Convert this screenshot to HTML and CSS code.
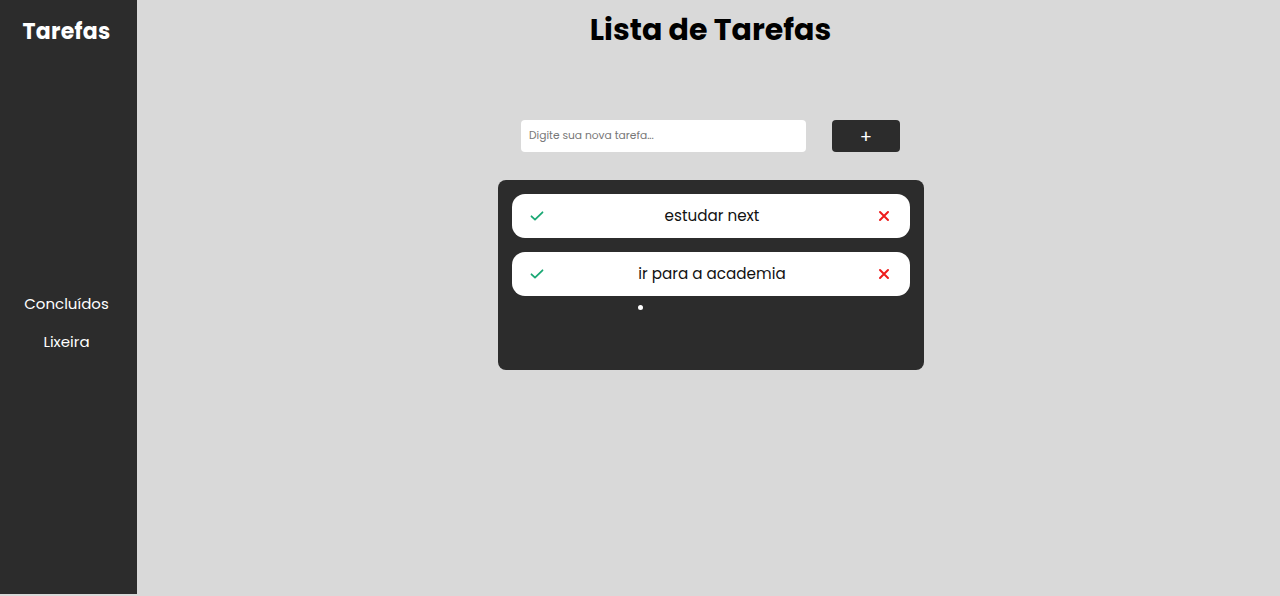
FILE: index.html
```html
<!DOCTYPE html>
<html lang="pt-BR">
<head>
<meta charset="utf-8">
<title>Lista de Tarefas</title>
<link rel="stylesheet" href="styles.css">
</head>
<body>
<div class="app">
  <aside class="sidebar">
    <h2 class="brand">Tarefas</h2>
    <nav class="nav">
      <a class="nav-link" href="#">Concluídos</a>
      <a class="nav-link" href="#">Lixeira</a>
    </nav>
  </aside>
  <main class="main">
    <h1 class="title">Lista de Tarefas</h1>
    <form class="new-task">
      <input class="task-input" type="text" placeholder="Digite sua nova tarefa...">
      <button class="add-btn" type="button">+</button>
    </form>
    <section class="board">
      <div class="task">
        <svg class="icon" viewBox="0 0 16 16" width="16" height="16"><path d="M2.5 8.3 L6 11.6 L13.5 4.3" fill="none" stroke="#1aa874" stroke-width="1.8" stroke-linecap="round" stroke-linejoin="round"/></svg>
        <span class="task-text">estudar next</span>
        <svg class="icon" viewBox="0 0 16 16" width="16" height="16"><path d="M4 4 L12 12 M12 4 L4 12" fill="none" stroke="#ee1c1c" stroke-width="2" stroke-linecap="round"/></svg>
      </div>
      <div class="task">
        <svg class="icon" viewBox="0 0 16 16" width="16" height="16"><path d="M2.5 8.3 L6 11.6 L13.5 4.3" fill="none" stroke="#1aa874" stroke-width="1.8" stroke-linecap="round" stroke-linejoin="round"/></svg>
        <span class="task-text">ir para a academia</span>
        <svg class="icon" viewBox="0 0 16 16" width="16" height="16"><path d="M4 4 L12 12 M12 4 L4 12" fill="none" stroke="#ee1c1c" stroke-width="2" stroke-linecap="round"/></svg>
      </div>
      <ul class="empty-list"><li></li></ul>
    </section>
  </main>
</div>
</body>
</html>
```
FILE: styles.css
```css
* { box-sizing: border-box; }
html, body { margin: 0; padding: 0; }
body {
  font-family: "Poppins", "Open Sans", "Noto Sans", sans-serif;
  background: #d9d9d9;
}
.app {
  display: flex;
  min-height: 594px;
}
.sidebar {
  width: 137px;
  flex: none;
  background: #2c2c2c;
  color: #fff;
  display: flex;
  flex-direction: column;
  align-items: center;
  padding-right: 4px;
}
.brand {
  margin: 17px 0 0;
  font-size: 22px;
  font-weight: 700;
  line-height: 30px;
  letter-spacing: 0.3px;
}
.nav {
  margin-top: 246px;
  display: flex;
  flex-direction: column;
  align-items: center;
  gap: 16px;
}
.nav-link {
  color: #fff;
  text-decoration: none;
  font-size: 15px;
  line-height: 22px;
}
.main {
  flex: 1;
  display: flex;
  flex-direction: column;
  align-items: center;
  padding-left: 4px;
}
.title {
  margin: 10px 0 0;
  font-size: 30px;
  font-weight: 700;
  line-height: 40px;
  color: #000;
}
.new-task {
  margin-top: 70px;
  display: flex;
  gap: 26px;
}
.task-input {
  width: 285px;
  height: 32px;
  border: none;
  border-radius: 4px;
  background: #fff;
  padding: 0 8px;
  font-family: inherit;
  font-size: 10.7px;
  color: #333;
  outline: none;
}
.task-input::placeholder { color: #777; }
.add-btn {
  width: 68px;
  height: 32px;
  border: none;
  border-radius: 4px;
  background: #2c2c2c;
  color: #fff;
  font-size: 18px;
  font-family: "Poppins", sans-serif;
  line-height: 1;
  padding: 2px 0 0;
}
.board {
  margin-top: 28px;
  width: 426px;
  height: 190px;
  background: #2c2c2c;
  border-radius: 8px;
  padding: 14px;
  display: flex;
  flex-direction: column;
  gap: 14px;
}
.task {
  height: 44px;
  flex: none;
  background: #fff;
  border-radius: 13px;
  display: flex;
  align-items: center;
  padding: 0 18px 0 17px;
}
.icon { flex: none; }
.task-text {
  flex: 1;
  text-align: center;
  font-size: 15.2px;
  line-height: 22px;
  padding: 0 0 0 4px;
  color: #111;
}
.empty-list {
  margin: -9px 0 0;
  padding: 0 0 0 143px;
  color: #fff;
  font-size: 14px;
  line-height: 14px;
}
```
